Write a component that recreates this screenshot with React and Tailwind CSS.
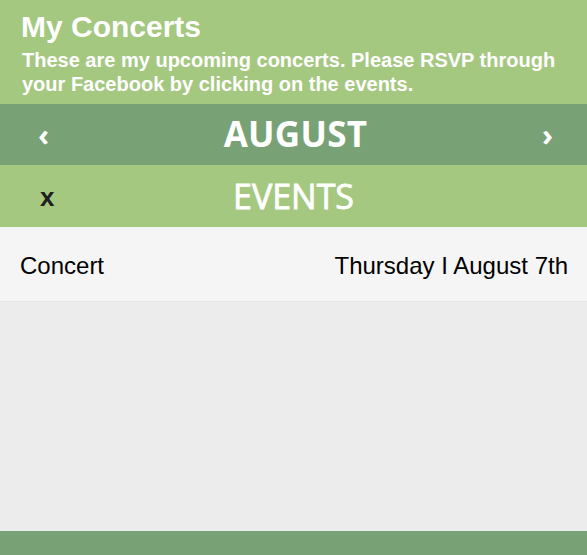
import React from 'react';

const events = [{ name: 'Concert', date: 'Thursday I August 7th' }];

export default function App() {
    return (
        <div className="flex flex-col h-[555px] w-[587px] overflow-hidden bg-[#ececec] font-['Liberation_Sans',Arial,sans-serif]">
            {/* header */}
            <div className="h-[104px] bg-[#a4c880] px-[21px] pt-[11px] text-white">
                <h1 className="text-[30px] font-bold leading-[32px]">My Concerts</h1>
                <p className="mt-[5px] pl-[1px] text-[20px] font-bold leading-[24px]">
                    These are my upcoming concerts. Please RSVP through your Facebook by clicking on the events.
                </p>
            </div>

            {/* month selector */}
            <div className="flex h-[61px] items-center justify-between bg-[#78a276] pl-[38px] pr-[34px] text-white">
                <button className="text-[30px] font-bold leading-none font-['Open_Sans',sans-serif]">‹</button>
                <span className="text-[35px] font-bold tracking-[0.3px] font-['Open_Sans',sans-serif]">AUGUST</span>
                <button className="text-[30px] font-bold leading-none font-['Open_Sans',sans-serif]">›</button>
            </div>

            {/* events title */}
            <div className="relative flex h-[62px] items-center justify-center bg-[#a4c880]">
                <span className="absolute left-[40px] top-[13px] text-[26px] font-bold text-[#1f1f1f]">x</span>
                <span className="text-[34px] text-white font-['Open_Sans',sans-serif] [-webkit-text-stroke:0.8px_white]">EVENTS</span>
            </div>

            {/* list */}
            <div className="flex-1">
                {events.map((ev) => (
                    <div key={ev.name} className="flex h-[75px] items-center justify-between border-b border-[#e6e6e6] bg-[#f5f5f5] pl-[20px] pr-[19px] pt-[3px] text-[24px] text-black">
                        <span>{ev.name}</span>
                        <span>{ev.date}</span>
                    </div>
                ))}
            </div>

            <div className="h-[24px] bg-[#78a276]" />
        </div>
    );
}
